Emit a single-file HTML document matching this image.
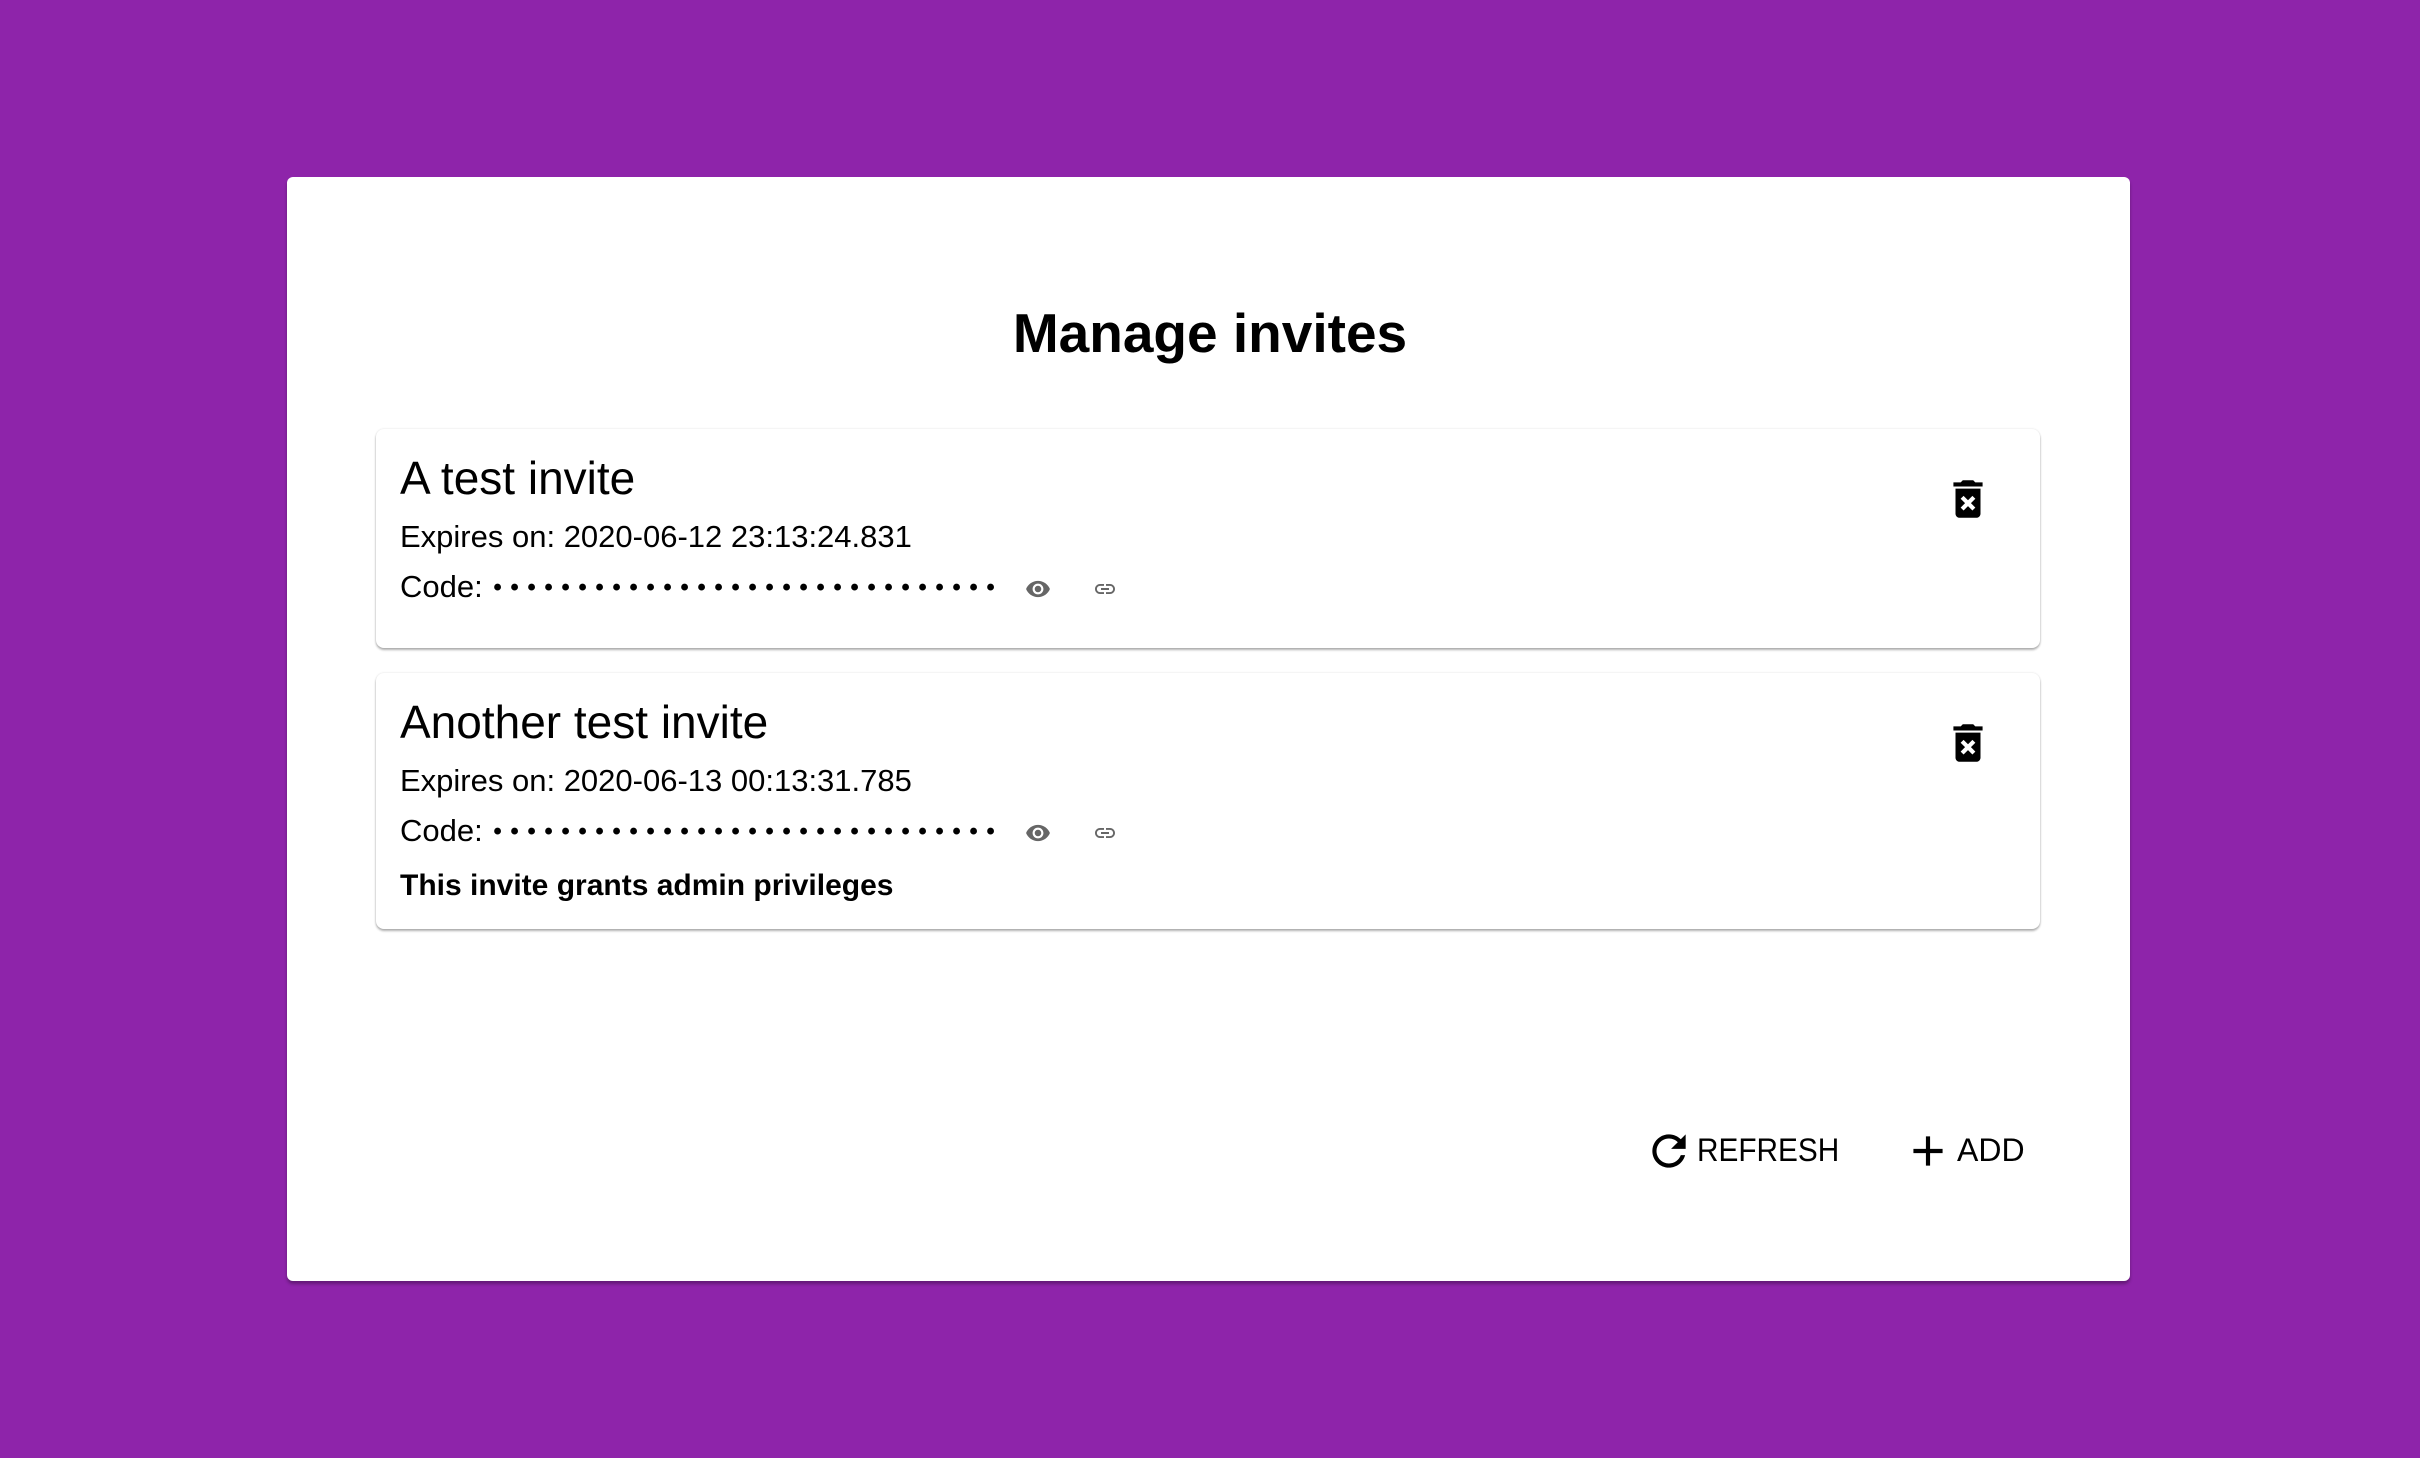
<!DOCTYPE html>
<html><head><meta charset="utf-8"><style>
html,body{margin:0;padding:0}
body{width:2420px;height:1458px;background:#8e24aa;position:relative;overflow:hidden;font-family:"Liberation Sans",sans-serif;color:#000}
.panel{position:absolute;left:287px;top:177px;width:1843px;height:1104px;background:#fff;border-radius:6px;box-shadow:0 3px 3px rgba(0,0,0,.3)}
.card{position:absolute;left:376px;width:1664px;background:#fff;border-radius:8px;box-shadow:0 2px 2px rgba(0,0,0,.3),0 0 2px rgba(0,0,0,.12)}
.t{position:absolute;white-space:nowrap}
h1{position:absolute;margin:0;left:0;width:2420px;top:306px;text-align:center;font-size:55px;font-weight:bold;line-height:1}
.h5{font-size:46px;line-height:1}
.b{font-size:31px;line-height:1}
.dots{font-size:24px;letter-spacing:8.6px;font-weight:bold;vertical-align:2px;margin-left:2px}
</style></head><body>
<div class="panel"></div>
<h1>Manage invites</h1>
<div class="card" style="top:429px;height:219px"></div>
<div class="card" style="top:673px;height:256px"></div>

<div class="t h5" style="left:400px;top:455px">A test invite</div>
<div class="t b" style="left:400px;top:521px">Expires on: 2020-06-12 23:13:24.831</div>
<div class="t b" style="left:400px;top:571px">Code: <span class="dots">••••••••••••••••••••••••••••••</span></div>

<div class="t h5" style="left:400px;top:699px">Another test invite</div>
<div class="t b" style="left:400px;top:765px">Expires on: 2020-06-13 00:13:31.785</div>
<div class="t b" style="left:400px;top:815px">Code: <span class="dots">••••••••••••••••••••••••••••••</span></div>
<div class="t b" style="left:400px;top:871px;font-weight:bold;font-size:30px">This invite grants admin privileges</div>

<svg class="t" style="left:1025px;top:576px" width="26" height="26" viewBox="0 0 24 24"><path fill="#666" d="M12 4.5C7 4.5 2.73 7.61 1 12c1.73 4.39 6 7.5 11 7.5s9.27-3.11 11-7.5c-1.73-4.39-6-7.5-11-7.5zM12 17c-2.76 0-5-2.24-5-5s2.24-5 5-5 5 2.24 5 5-2.24 5-5 5zm0-8c-1.66 0-3 1.34-3 3s1.34 3 3 3 3-1.34 3-3-1.34-3-3-3z"/></svg>
<svg class="t" style="left:1093px;top:577px" width="24" height="24" viewBox="0 0 24 24"><path fill="#666" d="M3.9 12c0-1.71 1.39-3.1 3.1-3.1h4V7H7c-2.76 0-5 2.24-5 5s2.24 5 5 5h4v-1.9H7c-1.71 0-3.1-1.39-3.1-3.1zM8 13h8v-2H8v2zm9-6h-4v1.9h4c1.71 0 3.1 1.39 3.1 3.1s-1.39 3.1-3.1 3.1h-4V17h4c2.76 0 5-2.24 5-5s-2.24-5-5-5z"/></svg>
<svg class="t" style="left:1025px;top:820px" width="26" height="26" viewBox="0 0 24 24"><path fill="#666" d="M12 4.5C7 4.5 2.73 7.61 1 12c1.73 4.39 6 7.5 11 7.5s9.27-3.11 11-7.5c-1.73-4.39-6-7.5-11-7.5zM12 17c-2.76 0-5-2.24-5-5s2.24-5 5-5 5 2.24 5 5-2.24 5-5 5zm0-8c-1.66 0-3 1.34-3 3s1.34 3 3 3 3-1.34 3-3-1.34-3-3-3z"/></svg>
<svg class="t" style="left:1093px;top:821px" width="24" height="24" viewBox="0 0 24 24"><path fill="#666" d="M3.9 12c0-1.71 1.39-3.1 3.1-3.1h4V7H7c-2.76 0-5 2.24-5 5s2.24 5 5 5h4v-1.9H7c-1.71 0-3.1-1.39-3.1-3.1zM8 13h8v-2H8v2zm9-6h-4v1.9h4c1.71 0 3.1 1.39 3.1 3.1s-1.39 3.1-3.1 3.1h-4V17h4c2.76 0 5-2.24 5-5s-2.24-5-5-5z"/></svg>

<svg class="t" style="left:1943px;top:474px" width="50" height="50" viewBox="0 0 24 24"><path d="M6 19c0 1.1.9 2 2 2h8c1.1 0 2-.9 2-2V7H6v12zm2.46-7.12l1.41-1.41L12 12.59l2.12-2.12 1.41 1.41L13.41 14l2.12 2.12-1.41 1.41L12 15.41l-2.12 2.12-1.41-1.41L10.59 14l-2.13-2.12zM15.5 4l-1-1h-5l-1 1H5v2h14V4z"/></svg>
<svg class="t" style="left:1943px;top:718px" width="50" height="50" viewBox="0 0 24 24"><path d="M6 19c0 1.1.9 2 2 2h8c1.1 0 2-.9 2-2V7H6v12zm2.46-7.12l1.41-1.41L12 12.59l2.12-2.12 1.41 1.41L13.41 14l2.12 2.12-1.41 1.41L12 15.41l-2.12 2.12-1.41-1.41L10.59 14l-2.13-2.12zM15.5 4l-1-1h-5l-1 1H5v2h14V4z"/></svg>

<svg class="t" style="left:1644px;top:1126px" width="50" height="50" viewBox="0 0 24 24"><path d="M17.65 6.35C16.2 4.9 14.21 4 12 4c-4.42 0-7.99 3.58-7.99 8s3.57 8 7.99 8c3.73 0 6.84-2.55 7.73-6h-2.08c-.82 2.33-3.04 4-5.65 4-3.31 0-6-2.69-6-6s2.69-6 6-6c1.66 0 3.140.69 4.22 1.78L13 11h7V4l-2.35 2.35z"/></svg>
<div class="t" style="left:1697px;top:1134px;font-size:32px;line-height:1;transform:scaleX(.93);transform-origin:left">REFRESH</div>
<svg class="t" style="left:1903px;top:1126px" width="50" height="50" viewBox="0 0 24 24"><path d="M19 13h-6v6h-2v-6H5v-2h6V5h2v6h6v2z"/></svg>
<div class="t" style="left:1957px;top:1134px;font-size:32px;line-height:1">ADD</div>
</body></html>
